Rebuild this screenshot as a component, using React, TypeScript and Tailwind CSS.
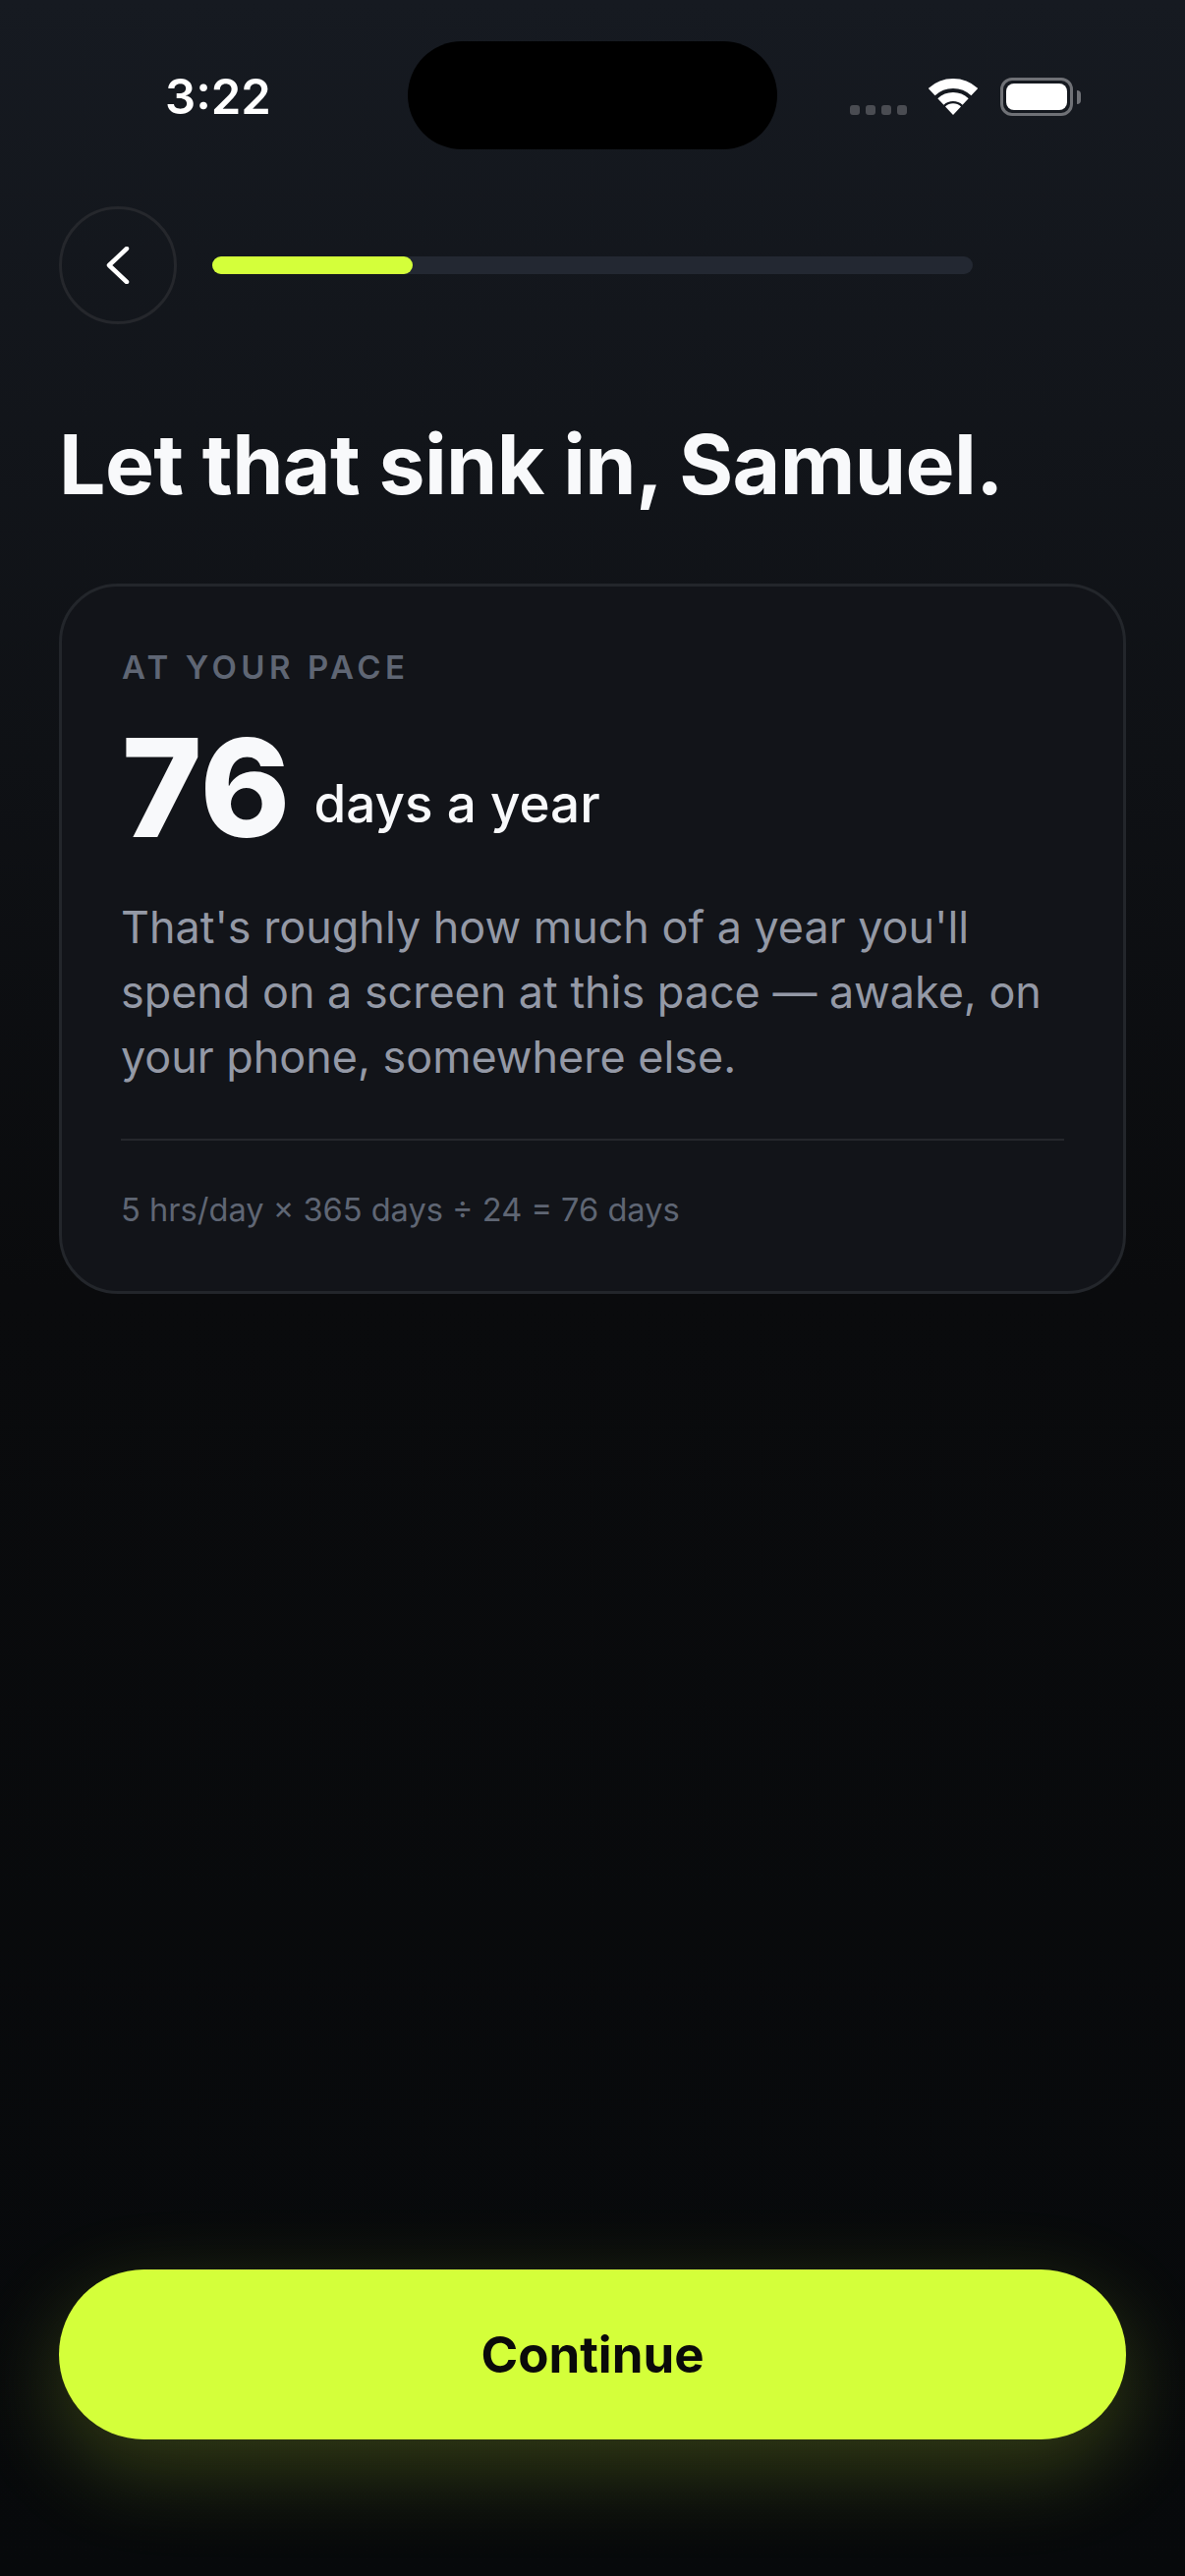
import React from "react";

function arc(r: number, a: number) {
  const rad = (a * Math.PI) / 180;
  const dx = r * Math.sin(rad);
  const dy = r * Math.cos(rad);
  return `M${25 - dx} ${37 - dy}A${r} ${r} 0 0 1 ${25 + dx} ${37 - dy}`;
}

function Wifi() {
  return (
    <svg width="50" height="37" viewBox="0 0 50 37" className="block">
      <path d={arc(32, 43)} fill="none" stroke="#fff" strokeWidth="10" />
      <path d={arc(18.5, 43)} fill="none" stroke="#fff" strokeWidth="9" />
      <path d="M25 37L17 28.5A11.5 11.5 0 0 1 33 28.5Z" fill="#fff" />
    </svg>
  );
}

function Chevron() {
  return (
    <svg width="24" height="38" viewBox="0 0 24 38" fill="none" className="block">
      <path d="M21 2L3 19L21 36" stroke="#fff" strokeWidth="4.5" strokeLinecap="round" strokeLinejoin="round" />
    </svg>
  );
}

export default function App() {
  return (
    <div
      className="w-[1206px] h-[2622px] flex flex-col overflow-hidden bg-gradient-to-b from-[#161a21] via-[#0a0b0d] via-50% to-[#07090b] text-[#f8f9fb]"
      style={{ fontFamily: "Inter, 'Liberation Sans', sans-serif" }}
    >
      <div className="h-[210px] shrink-0 pt-[42px] pl-[168px] flex items-start">
        <div className="w-[247px] h-[110px] flex items-center">
          <span className="mt-[2px] text-[49px] leading-none font-semibold text-white">3:22</span>
        </div>
        <div className="w-[376px] h-[110px] rounded-[55px] bg-black" />
        <div className="ml-[74px] mt-[36px] h-[40px] flex items-end">
          <div className="flex gap-[6px] mb-px">
            <span className="w-[10px] h-[10px] rounded-[3px] bg-[#4a4c52]" />
            <span className="w-[10px] h-[10px] rounded-[3px] bg-[#4a4c52]" />
            <span className="w-[10px] h-[10px] rounded-[3px] bg-[#4a4c52]" />
            <span className="w-[10px] h-[10px] rounded-[3px] bg-[#4a4c52]" />
          </div>
          <div className="ml-[22px] mb-px">
            <Wifi />
          </div>
          <div className="ml-[23px] flex items-center">
            <div className="w-[74px] h-[39px] rounded-[12px] border-[3px] border-[#6f7176] p-[3px]">
              <div className="w-full h-full rounded-[8px] bg-white" />
            </div>
            <div className="ml-[4px] w-[4px] h-[14px] rounded-r-full bg-[#6f7176]" />
          </div>
        </div>
      </div>

      <div className="px-[60px] flex items-center">
        <div className="w-[120px] h-[120px] rounded-full border-[3px] border-[#25272c] flex items-center justify-center">
          <Chevron />
        </div>
        <div className="ml-[36px] w-[774px] h-[18px] rounded-full bg-[#232832]">
          <div className="w-[204px] h-full rounded-full bg-[#d4ff3a]" />
        </div>
      </div>

      <h1 className="mt-[95px] ml-[60px] text-[84px] leading-[96px] font-bold tracking-[-0.6px] whitespace-nowrap text-[#f8f9fb]">
        Let that sink in, Samuel.
      </h1>

      <div className="mt-[73px] mx-[60px] h-[723px] rounded-[60px] border-[3px] border-[#23262b] bg-[#121419] px-[60px] pt-[62px]">
        <div className="ml-px text-[33px] leading-[40px] font-semibold tracking-[4.5px] text-[#5f6674]">AT YOUR PACE</div>
        <div className="mt-[38px] flex items-end gap-[24px] h-[130px]">
          <span className="ml-px text-[139px] leading-[130px] font-extrabold text-[#f8f9fb]">76</span>
          <span className="mb-[14px] text-[53px] leading-[70px] font-medium text-[#f8f9fb]">days a year</span>
        </div>
        <p className="mt-[44px] text-[44.9px] leading-[66px] text-[#9499a6]">
          That's roughly how much of a year you'll spend on a screen at this pace — awake, on your phone, somewhere else.
        </p>
        <div className="mt-[50px] h-[2px] bg-[#25272c]" />
        <div className="mt-[48px] text-[32.6px] leading-[44px] text-[#5f6674]">5 hrs/day × 365 days ÷ 24 = 76 days</div>
      </div>

      <div className="mt-auto mb-[139px] mx-[60px] h-[173px] rounded-full bg-[#d4ff3a] shadow-[0_30px_90px_rgba(212,255,58,0.22)] flex items-center justify-center">
        <span className="text-[51px] font-bold leading-none text-[#0a0a0a]">Continue</span>
      </div>
    </div>
  );
}
